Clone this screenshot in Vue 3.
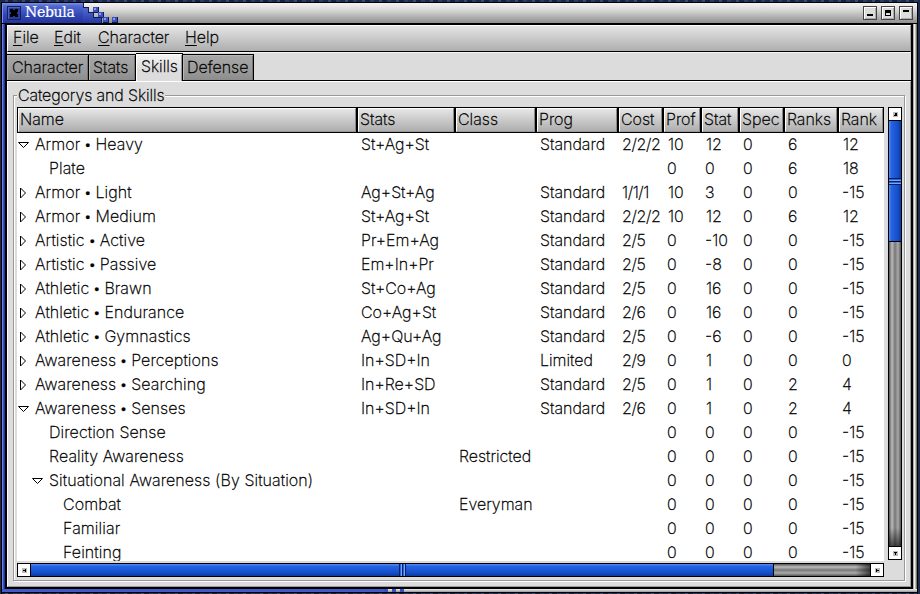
<script setup>
const menus = ['File', 'Edit', 'Character', 'Help']
const tabs = ['Character', 'Stats', 'Skills', 'Defense']
const columns = ['Name', 'Stats', 'Class', 'Prog', 'Cost', 'Prof', 'Stat', 'Spec', 'Ranks', 'Rank']
// [expander, depth, name, stats, class, prog, cost, prof, stat, spec, ranks, rank]
const rows = [
  ['open', 0, 'Armor • Heavy', 'St+Ag+St', '', 'Standard', '2/2/2', '10', '12', '0', '6', '12'],
  ['', 1, 'Plate', '', '', '', '', '0', '0', '0', '6', '18'],
  ['shut', 0, 'Armor • Light', 'Ag+St+Ag', '', 'Standard', '1/1/1', '10', '3', '0', '0', '-15'],
  ['shut', 0, 'Armor • Medium', 'St+Ag+St', '', 'Standard', '2/2/2', '10', '12', '0', '6', '12'],
  ['shut', 0, 'Artistic • Active', 'Pr+Em+Ag', '', 'Standard', '2/5', '0', '-10', '0', '0', '-15'],
  ['shut', 0, 'Artistic • Passive', 'Em+In+Pr', '', 'Standard', '2/5', '0', '-8', '0', '0', '-15'],
  ['shut', 0, 'Athletic • Brawn', 'St+Co+Ag', '', 'Standard', '2/5', '0', '16', '0', '0', '-15'],
  ['shut', 0, 'Athletic • Endurance', 'Co+Ag+St', '', 'Standard', '2/6', '0', '16', '0', '0', '-15'],
  ['shut', 0, 'Athletic • Gymnastics', 'Ag+Qu+Ag', '', 'Standard', '2/5', '0', '-6', '0', '0', '-15'],
  ['shut', 0, 'Awareness • Perceptions', 'In+SD+In', '', 'Limited', '2/9', '0', '1', '0', '0', '0'],
  ['shut', 0, 'Awareness • Searching', 'In+Re+SD', '', 'Standard', '2/5', '0', '1', '0', '2', '4'],
  ['open', 0, 'Awareness • Senses', 'In+SD+In', '', 'Standard', '2/6', '0', '1', '0', '2', '4'],
  ['', 1, 'Direction Sense', '', '', '', '', '0', '0', '0', '0', '-15'],
  ['', 1, 'Reality Awareness', '', 'Restricted', '', '', '0', '0', '0', '0', '-15'],
  ['open', 1, 'Situational Awareness (By Situation)', '', '', '', '', '0', '0', '0', '0', '-15'],
  ['', 2, 'Combat', '', 'Everyman', '', '', '0', '0', '0', '0', '-15'],
  ['', 2, 'Familiar', '', '', '', '', '0', '0', '0', '0', '-15'],
  ['', 2, 'Feinting', '', '', '', '', '0', '0', '0', '0', '-15'],
]
</script>

<template>
  <div class="desktop">
    <div class="window">
      <header class="titlebar">
        <div class="caption">
          <svg class="close" width="14" height="14" viewBox="0 0 14 14" shape-rendering="crispEdges">
            <path d="M0 0h14v14H0z" fill="#14205c" /><path d="M1 1h12v12H1z" fill="#4c62c8" /><path d="M2 2h11v11H2z" fill="#2c3d96" />
            <path d="M3 3h3v1h2V3h3v3h-1v2h1v3H8v-1H6v1H3V8h1V6H3z" fill="#000" />
          </svg>
          <span class="title">Nebula</span>
        </div>
        <svg class="bits" width="40" height="20" viewBox="0 0 40 20" shape-rendering="crispEdges">
          <defs>
            <linearGradient id="capblue" gradientUnits="userSpaceOnUse" x1="0" y1="0" x2="0" y2="20"><stop offset="0" stop-color="#6078e0" /><stop offset="1" stop-color="#2538a4" /></linearGradient>
          </defs>
          <path d="M0 4h5v5h5v5h8v6H0z" fill="url(#capblue)" />
          <path d="M.5 0v4.5h5v5h5v5h8V20" fill="none" stroke="#101a54" />
          <g v-for="p in [[10, 4], [15, 9], [20, 14], [29, 14]]" :key="p.join()">
            <rect :x="p[0]" :y="p[1]" width="6" height="6" fill="#101a54" />
            <rect :x="p[0]" :y="p[1]" width="5" height="5" fill="#3a50bc" />
            <rect :x="p[0] + 1" :y="p[1] + 1" width="2" height="2" fill="#8b9cf0" />
          </g>
        </svg>
        <div class="buttons">
          <svg v-for="kind in ['min', 'max', 'shade']" :key="kind" width="14" height="14" viewBox="0 0 14 14" shape-rendering="crispEdges">
            <path d="M0 0h14v14H0z" fill="#444" /><path d="M1 1h12v12H1z" fill="#fff" /><path d="M2 2h11v11H2z" fill="#aaa" /><path d="M2 2h10v10H2z" fill="#ddd" />
            <path v-if="kind === 'min'" d="M4 8h6v2H4z" />
            <path v-else-if="kind === 'max'" d="M4 4h6v6H4zM5 7v2h4V7z" fill-rule="evenodd" />
            <path v-else d="M4 4h6v2H4z" />
          </svg>
        </div>
      </header>
      <div class="body">
        <main class="content">
          <nav class="menubar">
            <span v-for="m in menus" :key="m" :class="m.toLowerCase()"><u>{{ m[0] }}</u>{{ m.slice(1) }}</span>
          </nav>
          <div class="tabs">
            <div v-for="t in tabs" :key="t" class="tab" :class="[t.toLowerCase(), { active: t === 'Skills' }]">{{ t }}</div>
          </div>
          <section class="page">
            <fieldset class="group">
              <legend>Categorys and Skills</legend>
              <div class="scroller">
                <div class="tree">
                  <div class="grid head">
                    <div v-for="c in columns" :key="c" class="th">{{ c }}</div>
                  </div>
                  <div class="rows">
                    <div v-for="(r, i) in rows" :key="i" class="grid row">
                      <div class="name" :class="'d' + r[1]">
                        <svg width="11" height="12" viewBox="0 0 11 12">
                          <path v-if="r[0] === 'open'" d="M.5 3.5h10L5.5 8.5z" />
                          <path v-else-if="r[0] === 'shut'" d="M2.5 1v10L7.5 6z" />
                        </svg>
                        <span :class="{ category: r[1] === 0 }">{{ r[2] }}</span>
                      </div>
                      <div v-for="(v, k) in r.slice(3)" :key="k" class="td" :class="{ cost: k === 3, one: k > 3 && v[0] === '1' }">{{ v }}</div>
                    </div>
                  </div>
                </div>
                <div class="vbar">
                  <div class="arrow"><svg width="5" height="5"><path d="M2 1h2v3H1V3h1z" /></svg></div>
                  <div class="vthumb"><i /></div>
                  <div class="vtrough" />
                  <div class="arrow"><svg width="5" height="5"><path d="M1 1h3v1H3v2H2V2H1z" /></svg></div>
                </div>
                <div class="hbar">
                  <div class="arrow"><svg width="5" height="5"><path d="M4 1v3H3V3H1V2h2V1z" /></svg></div>
                  <div class="hthumb"><i /></div>
                  <div class="htrough" />
                  <div class="arrow"><svg width="5" height="5"><path d="M1 1v3h1V3h2V2H2V1z" /></svg></div>
                </div>
              </div>
            </fieldset>
          </section>
        </main>
      </div>
      <footer class="sill"><i /><i /><i /></footer>
    </div>
  </div>
</template>

<style>
body { background: #202c48; }
</style>

<style scoped>
* { box-sizing: border-box; }
.desktop {
  width: 920px; height: 594px; overflow: hidden; padding: 2px 2px 0 1px;
  background: repeating-linear-gradient(90deg, #1c2a4c 0 5px, #344a78 5px 8px, #18223c 8px 13px, #2a3c66 13px 17px);
  font-family: Inter, "Liberation Sans", sans-serif; font-size: 16px; font-weight: 200;
  color: #000; -webkit-text-stroke: .3px #000; line-height: 24px; white-space: pre;
}
.window { width: 917px; height: 592px; border: 1px solid #000; border-bottom: 0; display: flex; flex-direction: column; }
.titlebar { height: 20px; flex: none; display: flex; background: linear-gradient(#f4f4f4, #d8d8d8 35%, #8f8f8f); }
.caption { width: 81px; display: flex; align-items: center; padding-left: 4px; background: linear-gradient(#7c90ee, #5068d0 15%, #3247b4 60%, #2435a0); border-left: 1px solid #7c90ee; }
.close { flex: none; }
.title { margin-left: 4px; font: 14px/18px "DejaVu Serif", serif; color: #fff; letter-spacing: -.3px; -webkit-text-stroke: .2px #fff; padding-bottom: 2px; }
.bits { flex: none; }
.buttons { margin-left: auto; display: flex; gap: 4px; padding: 3px 4px 0 0; }
.body {
  height: 566px; flex: none; padding: 0 4px 0 3px; border-top: 1px solid #000; display: flex;
  background: linear-gradient(90deg, #6b7fe6 0 1px, #3a50c4 1px 2px, #223390 2px 3px, transparent 3px calc(100% - 4px), #aaa calc(100% - 4px) calc(100% - 3px), #f0f0f0 calc(100% - 3px) calc(100% - 2px), #bbb calc(100% - 2px) calc(100% - 1px), #777 calc(100% - 1px));
}
.content { flex: 1; min-width: 0; display: flex; flex-direction: column; background: #dcdcdc; border: 1px solid #000; border-width: 1px 2px 2px; }
.menubar { height: 27px; flex: none; display: flex; border: 1px solid #fff; border-right-color: #999; border-bottom: 1px solid #000; background: linear-gradient(#e6e6e6, #ccc 45%, #aeaeae); }
.menubar span { padding-left: 5px; width: 41px; line-height: 23px; }
.menubar .edit { width: 44px; }
.menubar .character { width: 87px; }
.menubar u { text-underline-offset: 2px; text-decoration-thickness: 1px; }
.tabs { height: 29px; flex: none; display: flex; align-items: flex-end; border-bottom: 1px solid #000; padding-top: 1px; border-top: 1px solid #f4f4f4; }
.tab { height: 26px; border: 1px solid #000; border-width: 1px 1px 0 0; box-shadow: inset 1px 1px #b8b8b8, inset -1px 0 #777; background: linear-gradient(#a8a8a8, #989898 70%, #8c8c8c); padding-left: 5px; line-height: 24px; }
.tab.character { width: 82px; }
.tab.stats { width: 47px; padding-left: 4px; }
.tab.defense { width: 71px; padding-left: 4px; }
.tab.active { width: 47px; height: 28px; margin-bottom: -1px; background: linear-gradient(#f4f4f4, #dcdcdc 60%); box-shadow: inset 1px 1px #fff, inset -1px 0 #999; }
.page { flex: 1; min-height: 0; border: 1px solid #fff; border-right-color: #999; border-bottom-color: #999; padding: 3px 5px 5px 5px; }
.group { margin: 0; padding: 2px 0 0 3px; height: 496px; border: 1px solid #999; box-shadow: inset 1px 1px #fff, 1px 1px #fff; min-width: 0; }
.group legend { padding: 0 1px; height: 20px; line-height: 20px; background: #dcdcdc; letter-spacing: -.1px; }
.scroller { display: grid; grid-template: 454px 14px / 867px 14px; gap: 2px 4px; }
.tree { overflow: hidden; height: 454px; background: #fff; width: 867px; }
.grid { display: grid; grid-template-columns: 340px 98px 81px 82px 45px 38px 38px 45px 54px 46px; }
.head { height: 26px; background: #000; }
.th { height: 24px; margin: 1px; border: 1px solid #fff; border-right-color: #888; border-bottom-color: #999; background: linear-gradient(#e6e6e6, #ccc 45%, #aeaeae); padding-left: 1px; line-height: 20px; }
.rows { height: 428px; overflow: hidden; }
.row { height: 24px; line-height: 22px; }
.td { padding-left: 4px; }
.td.cost { letter-spacing: -.4px; }
.td.one { padding-left: 5px; }
.name { display: flex; padding-left: 1px; letter-spacing: .1px; }
.name svg { flex: none; margin: 6px 6px 0 0; fill: none; stroke: #000; stroke-width: 1; }
.category { word-spacing: -1.6px; }
.d1 { padding-left: 15px; }
.d2 { padding-left: 29px; }
.vbar { height: 453px; border: 1px solid #000; display: flex; flex-direction: column; width: 14px; }
.hbar { width: 867px; border: 1px solid #000; display: flex; height: 14px; }
.arrow { flex: none; width: 12px; height: 12px; background: #fff; display: grid; place-items: center; }
.arrow svg { display: block; background: #bbb; shape-rendering: crispEdges; }
.vthumb { height: 122px; flex: none; border: 1px solid #000; border-width: 1px 0; background: linear-gradient(90deg, #5a8cf0, #2463e4 20%, #1550cc 70%, #0c3a9c); display: grid; align-items: center; }
.vthumb i { height: 7px; background: repeating-linear-gradient(#06205c 0 1px, #2463e4 1px 2px, #7ba6f8 2px 3px); }
.vtrough { flex: 1; background: linear-gradient(transparent 94%, rgba(0,0,0,.6)), linear-gradient(90deg, #555, #bbb 25%, #777 50%, #aaa 75%, #555); border-bottom: 1px solid #000; }
.hthumb { width: 744px; flex: none; border: 1px solid #000; border-width: 0 1px; background: linear-gradient(#5a8cf0, #2463e4 20%, #1550cc 70%, #0c3a9c); display: grid; justify-items: center; }
.hthumb i { width: 7px; height: 12px; background: repeating-linear-gradient(90deg, #06205c 0 1px, #2463e4 1px 2px, #7ba6f8 2px 3px); }
.htrough { flex: 1; background: linear-gradient(90deg, transparent 85%, rgba(0,0,0,.6)), linear-gradient(#555, #bbb 25%, #777 50%, #aaa 75%, #555); border-right: 1px solid #000; }
.sill { height: 4px; flex: none; display: flex; gap: 4px; padding-left: 382px; border-bottom: 1px solid #000; background: linear-gradient(90deg, #4459c8 0 382px, transparent 382px), linear-gradient(#f0f0f0, #999); }
.sill i { width: 4px; height: 3px; background: #3a50c4; }
</style>
